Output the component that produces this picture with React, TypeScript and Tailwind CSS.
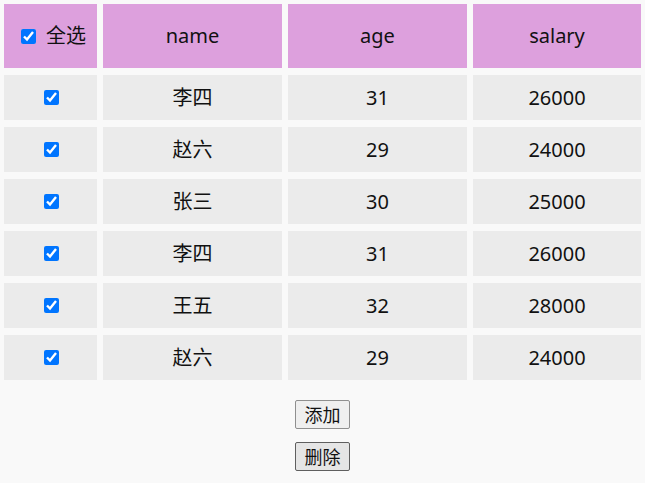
import React from "react";

const rows = [
  { name: "李四", age: 31, salary: 26000 },
  { name: "赵六", age: 29, salary: 24000 },
  { name: "张三", age: 30, salary: 25000 },
  { name: "李四", age: 31, salary: 26000 },
  { name: "王五", age: 32, salary: 28000 },
  { name: "赵六", age: 29, salary: 24000 },
];

const font = { fontFamily: '"Noto Sans", "Noto Sans CJK SC", sans-serif' };

function Check() {
  return (
    <input
      type="checkbox"
      checked
      readOnly
      className="m-0 h-[15px] w-[15px] accent-[#0075ff]"
    />
  );
}

export default function App() {
  return (
    <div className="min-h-[483px] w-[645px] bg-[#f9f9f9] text-[#111] text-[20px]" style={font}>
      <div className="grid grid-cols-[93px_179px_179px_168px] auto-rows-[45px] grid-rows-[64px] gap-x-[6px] gap-y-[7px] pl-[4px] pt-[4px]">
        <div className="flex items-center justify-center gap-[10px] bg-[#dda0dd] pl-[6px]">
          <Check />
          <span>全选</span>
        </div>
        <div className="flex items-center justify-center bg-[#dda0dd]">name</div>
        <div className="flex items-center justify-center bg-[#dda0dd]">age</div>
        <div className="flex items-center justify-center bg-[#dda0dd]">salary</div>
        {rows.map((r, i) => (
          <React.Fragment key={i}>
            <div className="flex items-center justify-center bg-[#ebebeb] pl-[2px]">
              <Check />
            </div>
            <div className="flex items-center justify-center bg-[#ebebeb]">{r.name}</div>
            <div className="flex items-center justify-center bg-[#ebebeb]">{r.age}</div>
            <div className="flex items-center justify-center bg-[#ebebeb]">{r.salary}</div>
          </React.Fragment>
        ))}
      </div>
      <div className="mt-[20px] flex flex-col items-center gap-[13px]">
        <button className="h-[29px] w-[55px] rounded-[2px] border border-[#8f8f8f] bg-[#efefef] text-[18px] leading-none text-[#111]">
          添加
        </button>
        <button className="h-[29px] w-[55px] rounded-[2px] border border-[#5f5f5f] bg-[#e5e5e5] text-[18px] leading-none text-[#111]">
          删除
        </button>
      </div>
    </div>
  );
}
